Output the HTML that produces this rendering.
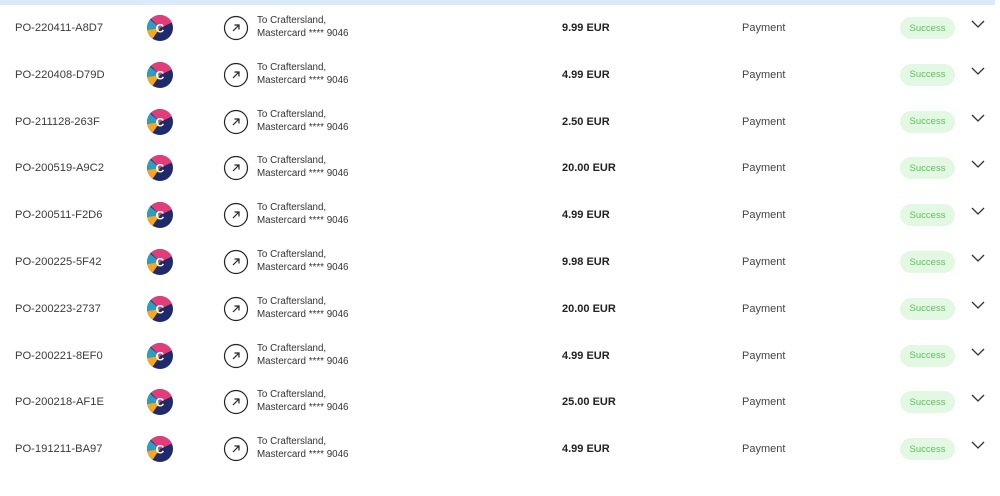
<!DOCTYPE html>
<html><head><style>
body{margin:0;width:1000px;height:471px;overflow:hidden;background:#fff;font-family:"Liberation Sans",sans-serif;position:relative}
.bar{position:absolute;left:0;top:0;width:995px;height:5px;background:#dbeafb}
.row{position:absolute;left:0;width:1000px;height:47px}
.id{position:absolute;left:15px;top:-7px;font-size:11.2px;color:#3a3a3a;line-height:14px}
.logo{position:absolute;left:147px;top:-13px}
.arr{position:absolute;left:223px;top:-13px}
.to{position:absolute;left:257px;top:-14px;font-size:9.8px;color:#333;line-height:13px}
.amt{position:absolute;left:562px;top:-7px;font-size:11px;font-weight:bold;color:#222;line-height:14px}
.pay{position:absolute;left:742px;top:-7px;font-size:11px;color:#444;line-height:14px}
.pill{position:absolute;left:900px;top:-11px;width:55px;height:22px;border-radius:11px;background:#e3f8e3;color:#5cbf5c;font-size:9.5px;display:flex;align-items:center;justify-content:center}
.chev{position:absolute;left:971px;top:-9px}
</style></head><body>
<div class="bar"></div>
<svg width="0" height="0" style="position:absolute"><defs>
<g id="lg"><clipPath id="cc"><circle cx="13" cy="13" r="13"/></clipPath>
<g clip-path="url(#cc)"><rect width="26" height="26" fill="#1f2a6b"/>
<path d="M0 0H26V7L13 13Z" fill="#e23d79"/><path d="M0 2L13 13L0 15Z" fill="#2a9fc3"/><path d="M13 13L4 26H0V15Z" fill="#f5a623"/></g>
<text x="13" y="17.5" font-size="12" font-weight="bold" fill="#fff" text-anchor="middle" font-family="Liberation Sans">C</text></g>
<g id="ar"><circle cx="13" cy="13" r="11.5" fill="none" stroke="#222" stroke-width="1.2"/><path d="M10 16L16 10M11.5 10H16V14.5" fill="none" stroke="#222" stroke-width="1.2"/></g>
</defs></svg>
<div id="rows"></div>
<script>
var d=[["PO-220411-A8D7","9.99"],["PO-220408-D79D","4.99"],["PO-211128-263F","2.50"],["PO-200519-A9C2","20.00"],["PO-200511-F2D6","4.99"],["PO-200225-5F42","9.98"],["PO-200223-2737","20.00"],["PO-200221-8EF0","4.99"],["PO-200218-AF1E","25.00"],["PO-191211-BA97","4.99"]];
var h="";d.forEach(function(r,i){var y=28+i*46.8;
h+='<div class="row" style="top:'+y+'px"><div class="id">'+r[0]+'</div><svg class="logo" width="26" height="26"><use href="#lg"/></svg><svg class="arr" width="26" height="26"><use href="#ar"/></svg><div class="to">To Craftersland,<br>Mastercard **** 9046</div><div class="amt">'+r[1]+' EUR</div><div class="pay">Payment</div><div class="pill">Success</div><svg class="chev" width="14" height="10"><path d="M1 2L7 8L13 2" fill="none" stroke="#333" stroke-width="1.3"/></svg></div>';});
document.getElementById("rows").innerHTML=h;
</script>
</body></html>
